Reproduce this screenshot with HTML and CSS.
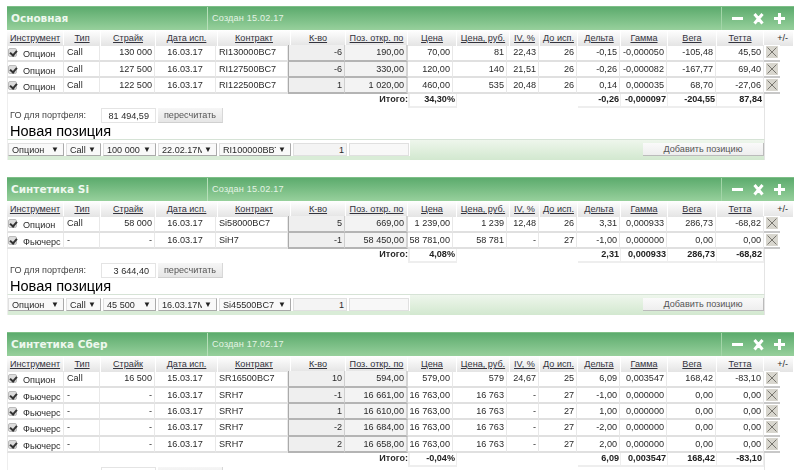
FILE: index.html
```html
<!DOCTYPE html>
<html lang="ru">
<head>
<meta charset="utf-8">
<title>Портфели</title>
<link rel="stylesheet" href="styles.css">
</head>
<body>
<main class="page">

<section class="panel">
  <header class="bar">
    <h2 class="name">Основная</h2>
    <div class="created">Создан 15.02.17</div>
    <div class="tools">
      <svg viewBox="0 0 72 24" width="72" height="24"><path class="tool" d="M10 12.500h11M32.500 8l8 9.500M40.500 8l-8 9.500M57.500 7v11M52 12.500h11"/></svg>
    </div>
  </header>
  <div class="heads">
    <a>Инструмент</a><a>Тип</a><a>Страйк</a><a>Дата исп.</a><a>Контракт</a><a>К-во</a><a>Поз. откр. по</a><a>Цена</a><a>Цена, руб.</a><a>IV, %</a><a>До исп.</a><a>Дельта</a><a>Гамма</a><a>Вега</a><a>Тетта</a><span class="pm">+/-</span>
  </div>
  <div class="row"><label class="inst"><i class="chk"></i>Опцион</label><span>Call</span><span class="r">130 000</span><span class="c">16.03.17</span><span>RI130000BC7</span><span class="r qty">-6</span><span class="r qty2">190,00</span><span class="r">70,00</span><span class="r">81</span><span class="r">22,43</span><span class="r">26</span><span class="r">-0,15</span><span class="r">-0,000050</span><span class="r">-105,48</span><span class="r">45,50</span><b class="del"><svg viewBox="0 0 12 12"><path d="M1.500 1.500l9 9M10.500 1.500l-9 9"/></svg></b></div>
  <div class="row"><label class="inst"><i class="chk"></i>Опцион</label><span>Call</span><span class="r">127 500</span><span class="c">16.03.17</span><span>RI127500BC7</span><span class="r qty">-6</span><span class="r qty2">330,00</span><span class="r">120,00</span><span class="r">140</span><span class="r">21,51</span><span class="r">26</span><span class="r">-0,26</span><span class="r">-0,000082</span><span class="r">-167,77</span><span class="r">69,40</span><b class="del"><svg viewBox="0 0 12 12"><path d="M1.500 1.500l9 9M10.500 1.500l-9 9"/></svg></b></div>
  <div class="row"><label class="inst"><i class="chk"></i>Опцион</label><span>Call</span><span class="r">122 500</span><span class="c">16.03.17</span><span>RI122500BC7</span><span class="r qty">1</span><span class="r qty2">1 020,00</span><span class="r">460,00</span><span class="r">535</span><span class="r">20,48</span><span class="r">26</span><span class="r">0,14</span><span class="r">0,000035</span><span class="r">68,70</span><span class="r">-27,06</span><b class="del"><svg viewBox="0 0 12 12"><path d="M1.500 1.500l9 9M10.500 1.500l-9 9"/></svg></b></div>
  <div class="totals"><span class="tl">Итого:</span><span class="tv t1">34,30%</span><span></span><span class="tv">-0,26</span><span class="tv">-0,000097</span><span class="tv">-204,55</span><span class="tv">87,84</span></div>
  <div class="go"><span class="gol">ГО для портфеля:</span><span class="goi">81 494,59</span><span class="gob">пересчитать</span></div>
  <h3 class="newpos">Новая позиция</h3>
  <div class="form"><span class="sel s1">Опцион<i>▼</i></span><span class="sel s2">Call<i>▼</i></span><span class="sel s3">100 000<i>▼</i></span><span class="sel s4"><em>22.02.17M</em><i>▼</i></span><span class="sel s5"><em>RI100000BBT</em><i>▼</i></span><span class="inp i1">1</span><span class="inp i2"></span><span class="fill"><span class="add">Добавить позицию</span></span></div>
</section>

<section class="panel">
  <header class="bar">
    <h2 class="name">Синтетика Si</h2>
    <div class="created">Создан 15.02.17</div>
    <div class="tools">
      <svg viewBox="0 0 72 24" width="72" height="24"><path class="tool" d="M10 12.500h11M32.500 8l8 9.500M40.500 8l-8 9.500M57.500 7v11M52 12.500h11"/></svg>
    </div>
  </header>
  <div class="heads">
    <a>Инструмент</a><a>Тип</a><a>Страйк</a><a>Дата исп.</a><a>Контракт</a><a>К-во</a><a>Поз. откр. по</a><a>Цена</a><a>Цена, руб.</a><a>IV, %</a><a>До исп.</a><a>Дельта</a><a>Гамма</a><a>Вега</a><a>Тетта</a><span class="pm">+/-</span>
  </div>
  <div class="row"><label class="inst"><i class="chk"></i>Опцион</label><span>Call</span><span class="r">58 000</span><span class="c">16.03.17</span><span>Si58000BC7</span><span class="r qty">5</span><span class="r qty2">669,00</span><span class="r">1 239,00</span><span class="r">1 239</span><span class="r">12,48</span><span class="r">26</span><span class="r">3,31</span><span class="r">0,000933</span><span class="r">286,73</span><span class="r">-68,82</span><b class="del"><svg viewBox="0 0 12 12"><path d="M1.500 1.500l9 9M10.500 1.500l-9 9"/></svg></b></div>
  <div class="row"><label class="inst"><i class="chk"></i>Фьючерс</label><span>-</span><span class="r">-</span><span class="c">16.03.17</span><span>SiH7</span><span class="r qty">-1</span><span class="r qty2">58 450,00</span><span class="r">58 781,00</span><span class="r">58 781</span><span class="r">-</span><span class="r">27</span><span class="r">-1,00</span><span class="r">0,000000</span><span class="r">0,00</span><span class="r">0,00</span><b class="del"><svg viewBox="0 0 12 12"><path d="M1.500 1.500l9 9M10.500 1.500l-9 9"/></svg></b></div>
  <div class="totals"><span class="tl">Итого:</span><span class="tv t1">4,08%</span><span></span><span class="tv">2,31</span><span class="tv">0,000933</span><span class="tv">286,73</span><span class="tv">-68,82</span></div>
  <div class="go"><span class="gol">ГО для портфеля:</span><span class="goi">3 644,40</span><span class="gob">пересчитать</span></div>
  <h3 class="newpos">Новая позиция</h3>
  <div class="form"><span class="sel s1">Опцион<i>▼</i></span><span class="sel s2">Call<i>▼</i></span><span class="sel s3">45 500<i>▼</i></span><span class="sel s4"><em>16.03.17M</em><i>▼</i></span><span class="sel s5"><em>Si45500BC7</em><i>▼</i></span><span class="inp i1">1</span><span class="inp i2"></span><span class="fill"><span class="add">Добавить позицию</span></span></div>
</section>

<section class="panel">
  <header class="bar">
    <h2 class="name">Синтетика Сбер</h2>
    <div class="created">Создан 17.02.17</div>
    <div class="tools">
      <svg viewBox="0 0 72 24" width="72" height="24"><path class="tool" d="M10 12.500h11M32.500 8l8 9.500M40.500 8l-8 9.500M57.500 7v11M52 12.500h11"/></svg>
    </div>
  </header>
  <div class="heads">
    <a>Инструмент</a><a>Тип</a><a>Страйк</a><a>Дата исп.</a><a>Контракт</a><a>К-во</a><a>Поз. откр. по</a><a>Цена</a><a>Цена, руб.</a><a>IV, %</a><a>До исп.</a><a>Дельта</a><a>Гамма</a><a>Вега</a><a>Тетта</a><span class="pm">+/-</span>
  </div>
  <div class="row"><label class="inst"><i class="chk"></i>Опцион</label><span>Call</span><span class="r">16 500</span><span class="c">15.03.17</span><span>SR16500BC7</span><span class="r qty">10</span><span class="r qty2">594,00</span><span class="r">579,00</span><span class="r">579</span><span class="r">24,67</span><span class="r">25</span><span class="r">6,09</span><span class="r">0,003547</span><span class="r">168,42</span><span class="r">-83,10</span><b class="del"><svg viewBox="0 0 12 12"><path d="M1.500 1.500l9 9M10.500 1.500l-9 9"/></svg></b></div>
  <div class="row"><label class="inst"><i class="chk"></i>Фьючерс</label><span>-</span><span class="r">-</span><span class="c">16.03.17</span><span>SRH7</span><span class="r qty">-1</span><span class="r qty2">16 661,00</span><span class="r">16 763,00</span><span class="r">16 763</span><span class="r">-</span><span class="r">27</span><span class="r">-1,00</span><span class="r">0,000000</span><span class="r">0,00</span><span class="r">0,00</span><b class="del"><svg viewBox="0 0 12 12"><path d="M1.500 1.500l9 9M10.500 1.500l-9 9"/></svg></b></div>
  <div class="row"><label class="inst"><i class="chk"></i>Фьючерс</label><span>-</span><span class="r">-</span><span class="c">16.03.17</span><span>SRH7</span><span class="r qty">1</span><span class="r qty2">16 610,00</span><span class="r">16 763,00</span><span class="r">16 763</span><span class="r">-</span><span class="r">27</span><span class="r">1,00</span><span class="r">0,000000</span><span class="r">0,00</span><span class="r">0,00</span><b class="del"><svg viewBox="0 0 12 12"><path d="M1.500 1.500l9 9M10.500 1.500l-9 9"/></svg></b></div>
  <div class="row"><label class="inst"><i class="chk"></i>Фьючерс</label><span>-</span><span class="r">-</span><span class="c">16.03.17</span><span>SRH7</span><span class="r qty">-2</span><span class="r qty2">16 684,00</span><span class="r">16 763,00</span><span class="r">16 763</span><span class="r">-</span><span class="r">27</span><span class="r">-2,00</span><span class="r">0,000000</span><span class="r">0,00</span><span class="r">0,00</span><b class="del"><svg viewBox="0 0 12 12"><path d="M1.500 1.500l9 9M10.500 1.500l-9 9"/></svg></b></div>
  <div class="row"><label class="inst"><i class="chk"></i>Фьючерс</label><span>-</span><span class="r">-</span><span class="c">16.03.17</span><span>SRH7</span><span class="r qty">2</span><span class="r qty2">16 658,00</span><span class="r">16 763,00</span><span class="r">16 763</span><span class="r">-</span><span class="r">27</span><span class="r">2,00</span><span class="r">0,000000</span><span class="r">0,00</span><span class="r">0,00</span><b class="del"><svg viewBox="0 0 12 12"><path d="M1.500 1.500l9 9M10.500 1.500l-9 9"/></svg></b></div>
  <div class="totals"><span class="tl">Итого:</span><span class="tv t1">-0,04%</span><span></span><span class="tv">6,09</span><span class="tv">0,003547</span><span class="tv">168,42</span><span class="tv">-83,10</span></div>
  <div class="go"><span class="gol"></span><span class="goi"></span><span class="gob"></span></div>
</section>

</main>
</body>
</html>
```

FILE: styles.css
```css
* { box-sizing: border-box; }
html, body { margin: 0; height: 470px; overflow: hidden; background: #fff; }
body { font: 9.100px/1 "Liberation Sans", Arial, sans-serif; color: #2a2a2a; }
.page { display: flex; flex-direction: column; gap: 17px; padding: 6px 0 0 7px; width: 794px; filter: blur(.3px); }
.panel { width: 787px; position: relative; }

.bar { display: flex; height: 24px; background: linear-gradient(#5cab6d, #97d09c); border-top: 1px solid #7fbf88; }
.name { margin: 0; width: 200px; padding-left: 4px; font: bold 10.500px/22px "DejaVu Sans", sans-serif; color: #eef8ee; }
.created { flex: 1; padding-left: 4px; border-left: 1px solid #b6dfb9; font: 9.100px/22px "Liberation Sans", sans-serif; letter-spacing: .2px; color: #e4f4e4; }
.tools { width: 73px; border-left: 1px solid #a3d5a8; }
.tools svg { display: block; margin-top: -1px; }
.tool { fill: none; stroke: #fff; stroke-width: 3; }

.heads { display: grid; grid-template-columns: 57px 37px 55px 62px 73px 55px 62px 49px 53px 30px 38px 43px 47px 49px 47px 30px; height: 15.300px; }
.heads > * { display: block; text-align: center; line-height: 16px; background: linear-gradient(#fff, #e4e4e4); border-right: 1px solid #fff; }
.heads a { color: #33333d; text-decoration: underline; }
.heads .pm { text-align: right; padding-right: 5px; }

.row { display: grid; grid-template-columns: 57px 36px 55px 61px 72px 57px 63px 45px 54px 32px 38px 43px 47px 49px 48px 16px; height: 16.300px; line-height: 15.500px; width: 773px; }
.row > * { display: block; border-bottom: 2px solid #e0e0e0; border-right: 1px solid #e8e8e8; padding: 0 3px; overflow: hidden; white-space: nowrap; }
.row > *:first-child { border-left: 1px solid #e8e8e8; padding: 2px 0 0; display: flex; gap: 6px; }
.r { text-align: right; }
.c { text-align: center; }
.row > .r { padding: 0 2px 0 0; }
.row > .qty { background: #efefef; border-left: 1px solid #aaa; border-bottom-color: #b4b4b4; border-right-color: #cfcfcf; }
.row > .qty2 { background: #f3f3f3; border-bottom-color: #b4b4b4; border-right: 2px solid #d4d4d4; }
.chk { flex: none; width: 9px; height: 9px; margin: 1px 0 0 0; border-radius: 2px; background: #dcdcdc; border: 1px solid #bbb; position: relative; }
.chk::after { content: ""; position: absolute; left: 2px; top: 0; width: 3px; height: 5px; border: solid #333; border-width: 0 2px 2px 0; transform: rotate(40deg); }
.row > .del { padding: 1px 2px 0 2px; background: #fff; border-right: 0; border-bottom-color: #c8c8c8; }
.del svg { display: block; width: 12px; height: 12px; background: #d8d6ce; }
.del path { stroke: #77756e; stroke-width: 1; fill: none; }

.totals { display: grid; grid-template-columns: 400px 49px 121px 43px 47px 49px 47px; height: 14px; width: 758px; line-height: 11px; font-weight: bold; border-left: 1px solid #eee; border-right: 1px solid #e4e4e4; }
.tl { text-align: right; padding-right: 0; }
.tv { text-align: right; padding-right: 1px; border-bottom: 2px solid #eee; border-right: 1px solid #eee; color: #222; }
.t1 { border-left: 2px solid #eee; }
.go { display: flex; height: 15px; width: 758px; align-items: center; padding-left: 2px; border-left: 1px solid #eee; border-right: 1px solid #e4e4e4; }
.gol { width: 91px; color: #444; }
.goi { width: 55px; height: 15px; margin-right: 2px; line-height: 14px; text-align: right; padding-right: 6px; border: 1px solid #e4e4e4; }
.gob { width: 65px; height: 15px; line-height: 15px; text-align: center; color: #555; background: linear-gradient(#f6f6f6, #e6e6e6); border-right: 1px solid #d8d8d8; border-bottom: 1px solid #d0d0d0; }
.newpos { margin: 0; height: 16px; width: 758px; padding-left: 2px; font: 14.560px/16px "Liberation Sans", sans-serif; color: #000; border-left: 1px solid #eee; border-right: 1px solid #e4e4e4; }

.form { display: flex; align-items: flex-start; width: 758px; height: 21px; padding: 3px 0 0; gap: 2px; border-top: 1px solid #d6e3d6; border-left: 1px solid #eee; border-right: 1px solid #e4e4e4; background: linear-gradient(#fff 0, #fff 16px, #d9ecd7 16px); }
.sel { display: flex; justify-content: space-between; height: 13px; line-height: 12px; padding: 0 4px 0 3px; background: #f9f9f9; border: 1px solid #e0e0e0; border-right-color: #aaa; border-bottom-color: #aaa; overflow: hidden; white-space: nowrap; }
.sel i { flex: none; font-style: normal; font-size: 8px; color: #222; }
.sel em { font-style: normal; overflow: hidden; flex: 1; margin-right: 2px; }
.s1 { width: 56px; }
.s2 { width: 35px; }
.s3 { width: 53px; }
.s4 { width: 59px; }
.s5 { width: 72px; }
.inp { height: 13px; line-height: 12px; text-align: right; padding-right: 2px; background: #f4f4f4; border: 1px solid #e0e0e0; }
.i1 { width: 54px; }
.i2 { width: 60px; background: #f8f8f8; }
.fill { flex: 1; align-self: stretch; margin: -3px 0 0 -1px; padding: 3px 0 0 233px; background: linear-gradient(#eef6ec, #d2e8cf); }
.add { display: block; height: 13px; line-height: 13px; text-align: center; color: #555; background: linear-gradient(#fafafa, #eee); border-right: 1px solid #bbb; border-bottom: 1px solid #bbb; }
```
